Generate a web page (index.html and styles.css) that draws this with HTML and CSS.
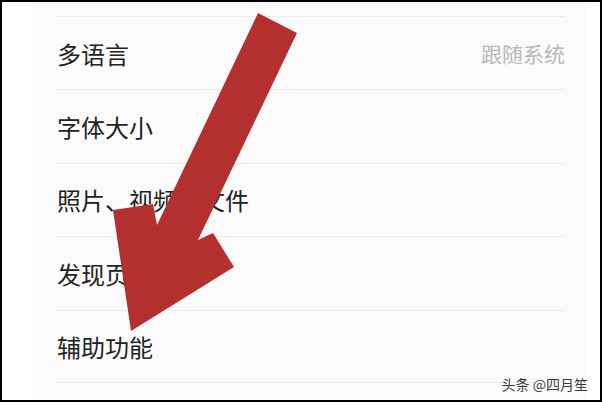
FILE: index.html
```html
<!DOCTYPE html>
<html lang="zh-CN">
<head>
  <meta charset="UTF-8">
  <meta name="viewport" content="width=device-width, initial-scale=1.0">
  <title>设置</title>
  <link rel="stylesheet" href="styles.css">
</head>
<body>

<div class="frame">
  <div class="screen">
    <ul class="settings">
      <li class="row">
        <span class="label">多语言</span>
        <span class="value">跟随系统</span>
      </li>
      <li class="row"><span class="label">字体大小</span></li>
      <li class="row"><span class="label">照片、视频和文件</span></li>
      <li class="row"><span class="label">发现页管理</span></li>
      <li class="row"><span class="label">辅助功能</span></li>
    </ul>
  </div>

  <svg class="arrow" width="602" height="402" viewBox="0 0 602 402">
    <polygon points="258,13 297,33 198,240 213,233 234,267 131,331 113,210 153,204 157,225" fill="#b3302f"/>
  </svg>

  <div class="watermark">头条 @四月笙</div>
</div>

</body>
</html>
```

FILE: styles.css
```css
body {
  margin: 0;
  padding: 0;
  background-color: #fff;
  font-family: "Noto Sans CJK SC", "Noto Sans", sans-serif;
}

.frame {
  position: relative;
  width: 602px;
  height: 402px;
  box-sizing: border-box;
  border: 2px solid #000;
  background-color: #fff;
  overflow: hidden;
}

.screen {
  height: 100%;
  margin: 0 14px 0 30px;
  background-color: #fbfbfb;
}

.settings {
  list-style: none;
  margin: 0;
  padding: 14px 0 0 0;
}

.row {
  display: flex;
  align-items: center;
  justify-content: space-between;
  height: 73.4px;
  box-sizing: border-box;
  margin: 0 21px 0 25px;
  border-top: 1px solid #ececec;
}

.row:last-child {
  border-bottom: 1px solid #ececec;
}

.label {
  font-size: 24px;
  color: #222;
}

.value {
  font-size: 21px;
  color: #b8b8b8;
}

.arrow {
  position: absolute;
  top: -2px;
  left: -2px;
}

.watermark {
  position: absolute;
  right: 12px;
  bottom: 6px;
  font-size: 14px;
  color: #3a3a3a;
  text-shadow: 0 0 2px #fff, 0 0 2px #fff;
}
```
